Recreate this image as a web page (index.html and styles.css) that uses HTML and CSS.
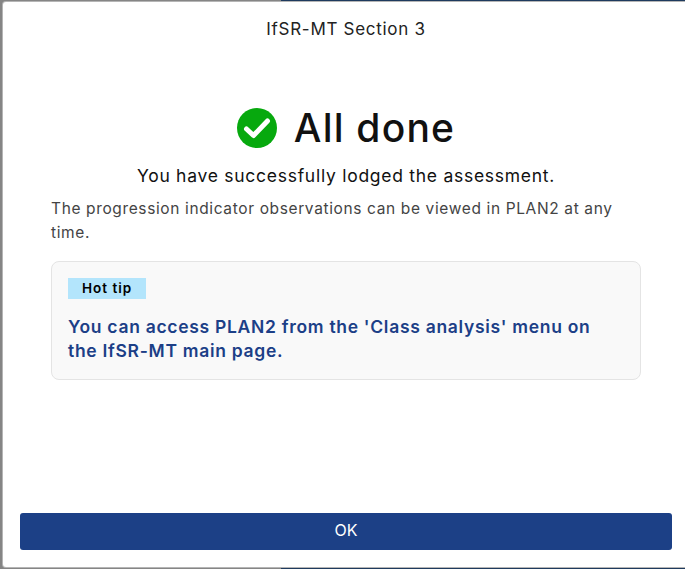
FILE: index.html
```html
<!DOCTYPE html>
<html lang="en">
<head>
    <meta charset="UTF-8">
    <meta name="viewport" content="width=device-width, initial-scale=1.0">
    <title>IfSR-MT Section 3</title>
    <link rel="stylesheet" href="styles.css">
</head>
<body>
    <!-- Dialog -->
    <div class="modal">
        <div class="modal-title">IfSR-MT Section 3</div>

        <div class="modal-body">
            <div class="done-heading">
                <svg class="done-icon" viewBox="0 0 40 40" aria-hidden="true">
                    <circle cx="20" cy="20" r="20" fill="#07a90e"/>
                    <path d="M9.5 21 L16.5 27.5 L30.5 13" fill="none" stroke="#fff" stroke-width="5" stroke-linecap="round" stroke-linejoin="round"/>
                </svg>
                <h1>All done</h1>
            </div>
            <p class="lead">You have successfully lodged the assessment.</p>
            <p class="note">The progression indicator observations can be viewed in PLAN2 at any time.</p>

            <!-- Tip card -->
            <div class="tip">
                <span class="tip-label">Hot tip</span>
                <p class="tip-text">You can access PLAN2 from the 'Class analysis' menu on the IfSR-MT main page.</p>
            </div>
        </div>

        <button class="ok-button">OK</button>
    </div>
</body>
</html>
```

FILE: styles.css
```css
html, body {
    height: 100%;
}
body {
    font-family: Inter, "Liberation Sans", sans-serif;
    margin: 0;
    padding: 2px 0 2px 3px;
    box-sizing: border-box;
    background: linear-gradient(to right, #858585 281px, #1e3a5e 281px);
    overflow: hidden;
}
.modal {
    display: flex;
    flex-direction: column;
    box-sizing: border-box;
    width: 687px;
    height: 565px;
    padding: 0 18px 17px 17px;
    background-color: #fff;
    border-radius: 3px;
    box-shadow: 0 0 0 1px #b5b5b5;
}
.modal-title {
    margin-top: 15px;
    text-align: center;
    font-size: 17px;
    line-height: 24px;
    letter-spacing: 0.7px;
    color: #222;
}
.modal-body {
    flex: 1;
    padding: 0 31px 0 31px;
}
.done-heading {
    display: flex;
    justify-content: center;
    align-items: center;
    gap: 17px;
    margin-top: 63px;
}
.done-icon {
    width: 40px;
    height: 40px;
}
h1 {
    margin: 0;
    font-size: 39px;
    line-height: 48px;
    font-weight: 500;
    letter-spacing: 1.2px;
    color: #111;
}
.lead {
    margin: 12px 0 0;
    text-align: center;
    font-size: 17.5px;
    line-height: 24px;
    letter-spacing: 0.73px;
    color: #111;
}
.note {
    margin: 9px 0 0;
    font-size: 15.5px;
    line-height: 24px;
    letter-spacing: 0.63px;
    color: #444;
}
.tip {
    margin-top: 16px;
    padding: 16px 16px 16px;
    background-color: #f9f9f9;
    border: 1px solid #e4e4e4;
    border-radius: 8px;
}
.tip-label {
    display: block;
    width: 78px;
    height: 21px;
    box-sizing: border-box;
    padding-left: 14px;
    background-color: #b3e5fc;
    font-size: 13.5px;
    line-height: 21px;
    font-weight: 600;
    letter-spacing: 1px;
    color: #000;
}
.tip-text {
    margin: 16px 0 0;
    font-size: 17.5px;
    line-height: 24px;
    font-weight: 600;
    letter-spacing: 0.7px;
    color: #1c3f87;
}
.ok-button {
    display: block;
    width: 100%;
    height: 37px;
    padding: 0 0 3px;
    border: none;
    border-radius: 3px;
    background-color: #1c4086;
    color: #fff;
    font-family: inherit;
    font-size: 16px;
    cursor: pointer;
}
```
